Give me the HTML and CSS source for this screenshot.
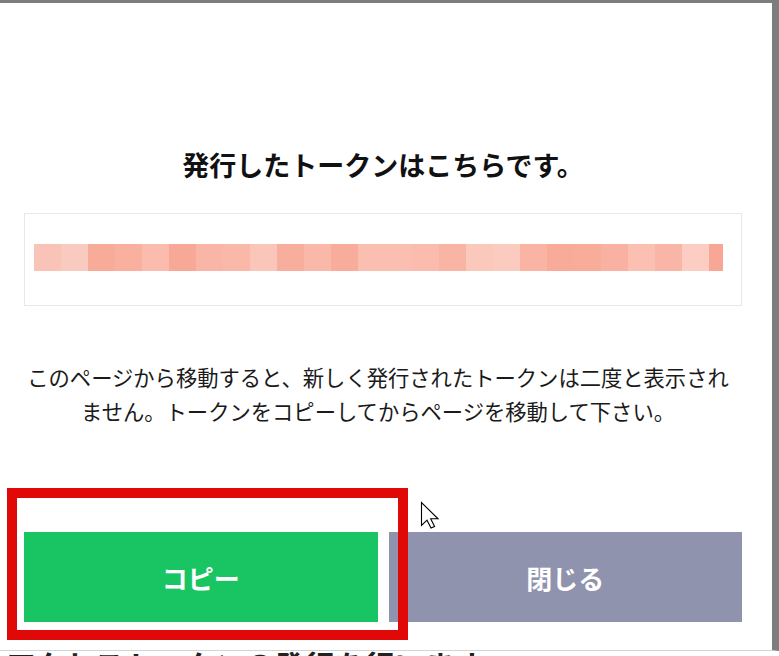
FILE: index.html
```html
<!DOCTYPE html>
<html lang="ja">
<head>
<meta charset="utf-8">
<title>トークン発行</title>
<link rel="stylesheet" href="styles.css">
</head>
<body>
<div class="screen">
  <div class="window">
    <div class="dialog">
      <h1 class="title">発行したトークンはこちらです。</h1>
      <div class="token-box">
        <div class="token-mask" aria-label="token"></div>
      </div>
      <p class="notice">このページから移動すると、新しく発行されたトークンは二度と表示されません。トークンをコピーしてからページを移動して下さい。</p>
      <div class="actions">
        <button class="btn btn-copy" type="button">コピー</button>
        <button class="btn btn-close" type="button">閉じる</button>
      </div>
    </div>
    <div class="highlight"></div>
    <svg class="cursor" width="20" height="28" viewBox="0 0 20 28">
      <path d="M1.5 1.5 L1.5 24.5 L7 19.2 L11 27 L14.6 25.4 L10.7 17.8 L18 17.8 Z" fill="#fff" stroke="#000" stroke-width="1.1" stroke-linejoin="miter"/>
    </svg>
  </div>
  <div class="page-below">
    <span class="below-text">アクセストークンの発行を行います</span>
  </div>
</div>
</body>
</html>
```

FILE: styles.css
```css
* { box-sizing: border-box; }

html, body {
  margin: 0;
  padding: 0;
  background: #ffffff;
}

body {
  font-family: "Noto Sans CJK JP", "Noto Sans", "Liberation Sans", sans-serif;
  color: #111;
}

.screen {
  width: 779px;
  height: 656px;
  display: flex;
  flex-direction: column;
  overflow: hidden;
  background: #fff;
}

.window {
  position: relative;
  height: 651px;
  flex: none;
  background: #fff;
  border-top: 3px solid #7d7d7d;
  border-right: 7px solid #7d7d7d;
  border-bottom: 1px solid #d4d4d4;
}

.dialog {
  padding: 144px 30px 0 24px;
}

.title {
  margin: 0;
  font-size: 27px;
  font-weight: 700;
  line-height: 36px;
  text-align: center;
  color: #111;
}

.token-box {
  margin-top: 30px;
  height: 93px;
  border: 1px solid #e8e8e8;
  padding: 30px 18px 0 9px;
}

.token-mask {
  height: 27px;
  background: linear-gradient(to right,
    #f9c4b7 0 27px, #f9cbc0 27px 54px, #f8ab98 54px 81px, #f9b09f 81px 108px,
    #fbbcad 108px 135px, #f8a896 135px 162px, #f9b6a6 162px 189px, #f9b8a8 189px 216px,
    #f9c6b9 216px 243px, #f8ae9d 243px 270px, #f9b8a8 270px 297px, #f8ad9c 297px 324px,
    #fbbfb1 324px 351px, #fbbfb1 351px 378px, #fbbcae 378px 405px, #f9b5a4 405px 432px,
    #fbc8bc 432px 459px, #fbcbbf 459px 486px, #f9b4a3 486px 513px, #f8ab98 513px 540px,
    #f8ac99 540px 567px, #f9b2a1 567px 594px, #fbc0b2 594px 621px, #f9b6a6 621px 648px,
    #fbcdc3 648px 675px, #f8a796 675px 689px);
}

.notice {
  margin: 54px 0 0;
  padding-right: 10px;
  font-size: 21.3px;
  line-height: 34px;
  text-align: center;
  color: #1a1a1a;
}

.actions {
  margin-top: 104px;
  display: flex;
  gap: 11px;
}

.btn {
  flex: 1;
  height: 90px;
  border: none;
  border-radius: 0;
  font-family: inherit;
  font-size: 26px;
  font-weight: 700;
  color: #fff;
  padding: 0;
}

.btn-copy { background: #19c563; }
.btn-close { background: #8f93ad; }

.highlight {
  position: absolute;
  left: 7px;
  top: 485px;
  width: 401px;
  height: 152px;
  border: 10px solid #e10808;
}

.cursor {
  position: absolute;
  left: 420px;
  top: 498px;
}

.page-below {
  flex: 1;
  overflow: hidden;
  padding-left: 6px;
  background: #fff;
}

.below-text {
  display: block;
  font-size: 30px;
  font-weight: 700;
  line-height: 30px;
  margin-top: -2px;
  color: #222;
  white-space: nowrap;
}
```
